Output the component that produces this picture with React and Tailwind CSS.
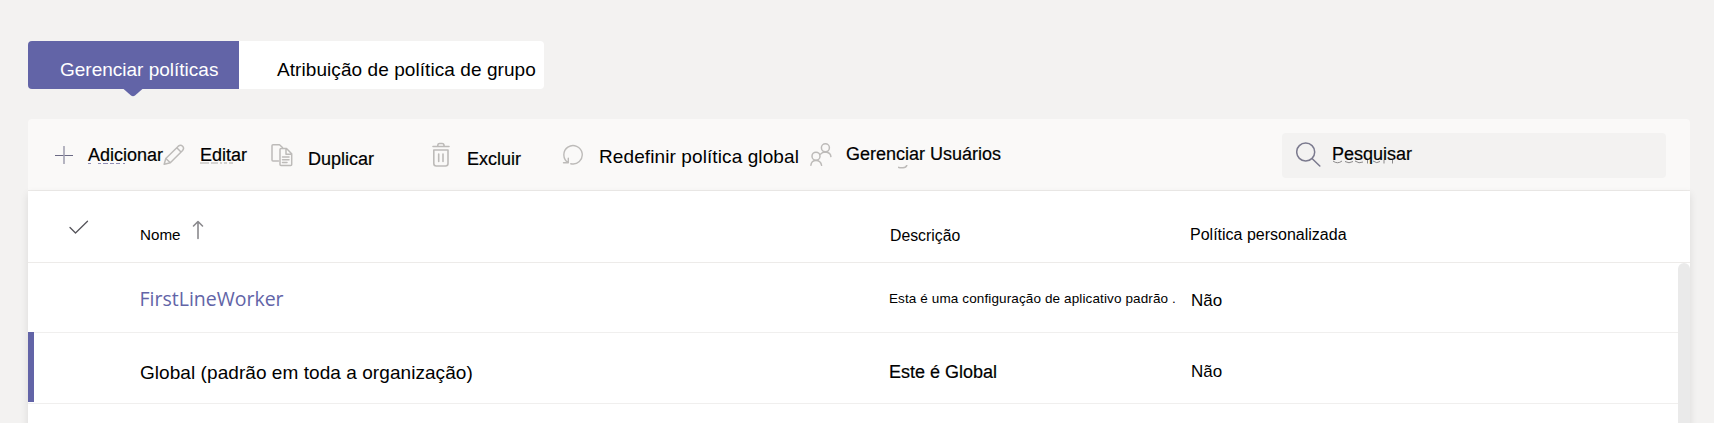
const font = "font-['Liberation_Sans',Arial,sans-serif]";

function Label({ children, className }) {
  return <span className={"block shrink-0 whitespace-nowrap leading-[20px] " + className}>{children}</span>;
}

function Icon({ w, h, className = "", children, color = "#bdbbb9", sw = 1.5 }) {
  return (
    <svg width={w} height={h} viewBox={`0 0 ${w} ${h}`} fill="none" stroke={color} strokeWidth={sw} strokeLinecap="round" strokeLinejoin="round" className={"block shrink-0 " + className}>
      {children}
    </svg>
  );
}

function Marks({ className, d, color, sw = 1 }) {
  return (
    <svg width="64" height="4" viewBox="0 0 64 4" fill="none" stroke={color} strokeWidth={sw} className={"absolute " + className}>
      <path d={d} />
    </svg>
  );
}

function Tabs() {
  return (
    <div className="ml-[28px] flex h-[48px] w-[516px]">
      <div className="relative w-[211px] rounded-l-[4px] bg-[#6264a7] pl-[32px] pt-[19px]">
        <Label className="text-[19px] text-white">Gerenciar políticas</Label>
        <svg width="20" height="9" viewBox="0 0 20 9" className="absolute left-[95px] top-[47px]">
          <path d="M0 0.5H20L12 7.4Q10 9 8 7.4Z" fill="#6264a7" />
        </svg>
      </div>
      <div className="w-[305px] rounded-r-[4px] bg-white pl-[38px] pt-[19px]">
        <Label className="text-[19px] tracking-[0.07px]">Atribuição de política de grupo</Label>
      </div>
    </div>
  );
}

function Toolbar() {
  return (
    <div className="flex h-[72px] items-start rounded-t-[4px] border-b border-[#edebe9] bg-[#faf9f8]">
      <Icon w={18} h={18} color="#6b6a85" sw={1.2} className="ml-[27px] mt-[27px]">
        <path d="M0.5 9.5H17.5" />
        <path d="M9 0.5V17.5" stroke="#a3a2b2" strokeWidth="1.6" />
      </Icon>
      <div className="relative ml-[15px] mt-[26px] w-[75px] text-[18px]">
        <Label className="[-webkit-text-stroke:0.2px]">Adicionar</Label>
        <Marks className="left-0 top-[17px]" color="#8f8db5" d="M0 1.5H3M10 1.5H13M15 1.5H20M22 1.5H26M28 1.5H32M35 1.5H37" />
      </div>
      <Icon w={22} h={22} className="mt-[25px]">
        <path d="M1.2 20.3L2.8 14.5L15.3 2.2Q17.6 0.3 19.6 2.2Q21.5 4.2 19.6 6.5L7.3 18.8ZM2.8 14.5L7.3 18.8M13.8 3.8L18 8" />
      </Icon>
      <div className="relative ml-[15px] mt-[26px] w-[47px] text-[18px]">
        <Label className="[-webkit-text-stroke:0.2px]">Editar</Label>
        <Marks className="left-0 top-[16px]" color="#c8c6c4" sw={1.5} d="M0 2H9M11 2H18M20 2H22M24 2H27M29 2H33" />
      </div>
      <Icon w={22} h={24} className="ml-[24px] mt-[24px]">
        <path d="M7.5 18H2Q1 18 1 17V2.8Q1 1.8 2 1.8H8.5L11.5 4.5" />
        <path d="M10 5.5H15.5L20.7 10.7V21.5Q20.7 22.5 19.7 22.5H10Q9 22.5 9 21.5V6.5Q9 5.5 10 5.5ZM15 5.5V11.2H20.7M11.5 14H18M11.5 16.7H18M11.5 19.4H16" />
      </Icon>
      <Label className="ml-[15px] mt-[30px] w-[66px] text-[18px] [-webkit-text-stroke:0.2px]">Duplicar</Label>
      <Icon w={18} h={25} sw={1.6} className="ml-[58px] mt-[23px]">
        <path d="M1 4.5H17M5.8 4.2V3Q6 1.5 7.5 1.5H10.2Q11.7 1.5 12 3V4.2M1.8 8H16V21.5Q16 24 13.5 24H4.3Q1.8 24 1.8 21.5ZM6.7 12V19.5M11 12V19.5" />
      </Icon>
      <Label className="ml-[17px] mt-[30px] w-[54px] text-[18px] [-webkit-text-stroke:0.2px]">Excluir</Label>
      <Icon w={22} h={22} sw={1.4} className="ml-[41px] mt-[25px]">
        <path d="M6.2 18.6A9.2 9.2 0 1 1 8.8 19.7M6.3 14.3V18.8H1.5" />
      </Icon>
      <Label className="ml-[15px] mt-[28px] w-[198px] text-[19px] tracking-[0.1px]">Redefinir política global</Label>
      <Icon w={23} h={24} className="ml-[13px] mt-[24px]">
        <circle cx="15.4" cy="4.8" r="4" />
        <circle cx="6" cy="13.2" r="4" />
        <path d="M0.9 22.3Q1.3 17.4 6 17.4T11.6 22.3M10.6 11.2Q12 9 15.4 9Q20.6 9.4 20.9 13.6" />
      </Icon>
      <div className="relative ml-[13px] mt-[25px] w-[155px] text-[18px]">
        <Label className="[-webkit-text-stroke:0.2px]">Gerenciar Usuários</Label>
        <Marks className="left-[52px] top-[21px]" color="#bdbbb9" sw={1.5} d="M0 2.2Q2 3 5 2.8Q8 2.8 9 0" />
      </div>
      <div className="ml-auto mr-[24px] mt-[14px] flex h-[45px] w-[384px] items-start rounded-[4px] bg-[#f3f2f1]">
        <Icon w={25} h={25} color="#7b7a8e" sw={1.5} className="ml-[14px] mt-[9px]">
          <path d="M18.7 10A9 9 0 1 1 0.7 10A9 9 0 1 1 18.7 10ZM16 16.5L23.8 24" />
        </Icon>
        <div className="relative ml-[11px] mt-[11px] text-[18px]">
          <Marks className="left-px top-[16px]" color="#8a8889" d="M0 1Q4.5 4.5 9 1M12 1.5Q16 4 20 1.5M22 1Q26 4 30 2M34.5 0V3.5M40 1Q44 4 47 1.5M51 0V3.5M59.5 0V3.5" />
          <Label className="[-webkit-text-stroke:0.2px]">Pesquisar</Label>
        </div>
      </div>
    </div>
  );
}

export default function App() {
  return (
    <div className={"h-[423px] w-[1714px] overflow-hidden bg-[#f3f2f1] pt-[41px] text-black " + font}>
      <Tabs />
      <div className="ml-[28px] mt-[30px] w-[1662px]">
        <Toolbar />
        <div className="h-[260px] bg-white shadow-[0_3px_8px_rgba(0,0,0,0.1)]">
          <div className="flex h-[72px] items-start border-b border-[#edebe9]">
            <Icon w={20} h={14} color="#55545a" sw={1.3} className="ml-[41px] mt-[29px]">
              <path d="M1 7.5L6.5 13L18.5 1.2" />
            </Icon>
            <Label className="ml-[51px] mt-[34px] w-[40px] text-[15.2px]">Nome</Label>
            <Icon w={12} h={20} color="#8a898d" sw={1.6} className="ml-[12px] mt-[29px]">
              <path d="M6 18.5V1.5M1.5 6L6 1.5L10.5 6" />
            </Icon>
            <Label className="ml-[686px] mt-[35px] w-[300px] text-[15.8px]">Descrição</Label>
            <Label className="mt-[34px] text-[16px]">Política personalizada</Label>
          </div>
          <div className="flex h-[188px]">
            <div className="w-[1650px]">
              <div className="flex h-[70px] items-start border-b border-[#f0efee]">
                <Label className="ml-[111.5px] mt-[26px] w-[749.5px] font-['Open_Sans',sans-serif] text-[19.5px] text-[#6264a7]">FirstLineWorker</Label>
                <Label className="mt-[26px] w-[302px] text-[13.5px] tracking-[0.12px]">Esta é uma configuração de aplicativo padrão .</Label>
                <Label className="mt-[28px] text-[17px]">Não</Label>
              </div>
              <div className="flex h-[71px] items-start border-b border-[#f0efee]">
                <div className="-mt-px h-[70px] w-[6px] shrink-0 bg-[#6264a7]" />
                <Label className="ml-[106px] mt-[30px] w-[749px] text-[19px] tracking-[0.06px]">Global (padrão em toda a organização)</Label>
                <Label className="mt-[29px] w-[302px] text-[18px] [-webkit-text-stroke:0.2px]">Este é Global</Label>
                <Label className="mt-[29px] text-[17px]">Não</Label>
              </div>
            </div>
            <div className="w-[12px] rounded-t-[6px] bg-[#eaeaea]" />
          </div>
        </div>
      </div>
    </div>
  );
}
